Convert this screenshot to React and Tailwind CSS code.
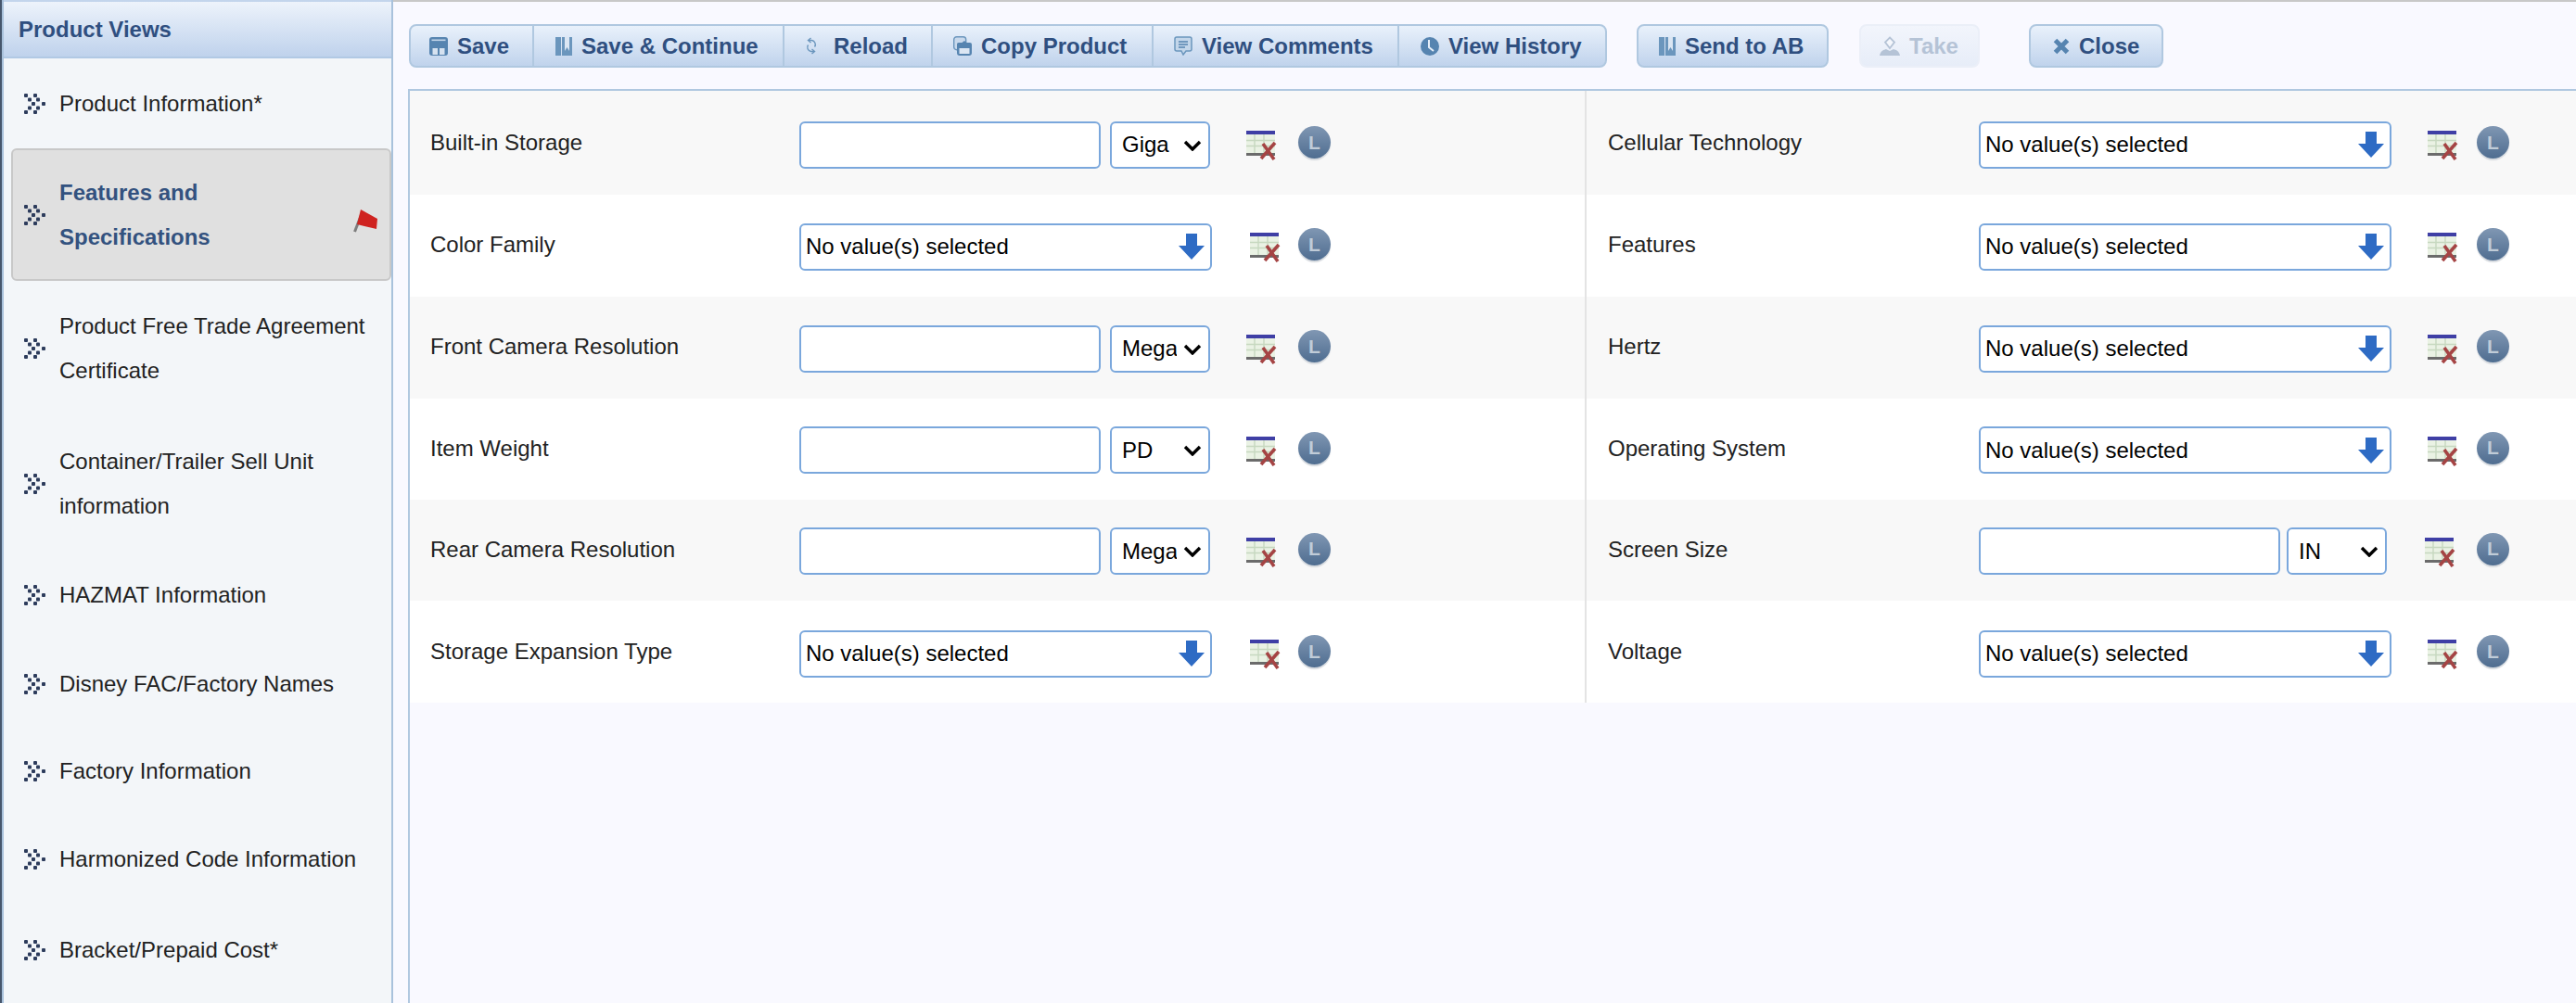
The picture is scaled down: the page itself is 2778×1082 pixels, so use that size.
import { useState } from 'react';

const sideItems = [
    { label: 'Product Information*', cls: 'h-[97px]' },
    { label: 'Features and Specifications', cls: 'h-[143px]', active: true },
    { label: 'Product Free Trade Agreement Certificate', cls: 'h-[146px]' },
    { label: 'Container/Trailer Sell Unit information', cls: 'h-[145px]' },
    { label: 'HAZMAT Information', cls: 'h-[96px]' },
    { label: 'Disney FAC/Factory Names', cls: 'h-[95px]' },
    { label: 'Factory Information', cls: 'h-[94px]' },
    { label: 'Harmonized Code Information', cls: 'h-[96px]' },
    { label: 'Bracket/Prepaid Cost*', cls: 'h-[100px]' },
];

// row heights follow the reference, it is not quite a 110px rhythm
const rows = [
    { cls: 'h-[112px] bg-[#f8f8f8]', pad: 'pt-[2px]', left: { label: 'Built-in Storage', unit: 'Giga' }, right: { label: 'Cellular Technology' } },
    { cls: 'h-[110px] bg-white', pad: '', left: { label: 'Color Family' }, right: { label: 'Features' } },
    { cls: 'h-[110px] bg-[#f8f8f8]', pad: '', left: { label: 'Front Camera Resolution', unit: 'Mega' }, right: { label: 'Hertz' } },
    { cls: 'h-[109px] bg-white', pad: '', left: { label: 'Item Weight', unit: 'PD' }, right: { label: 'Operating System' } },
    { cls: 'h-[109px] bg-[#f8f8f8]', pad: '', left: { label: 'Rear Camera Resolution', unit: 'Mega' }, right: { label: 'Screen Size', unit: 'IN' } },
    { cls: 'h-[110px] bg-white', pad: 'pt-[2px]', left: { label: 'Storage Expansion Type' }, right: { label: 'Voltage' } },
];

const chevronDots = [[1, 0], [11, 0], [5, 4.5], [14, 4.5], [9, 9], [20, 9], [5, 13.5], [14, 13.5], [1, 18], [11, 18]];

const Chevrons = () => (
    <svg width="24" height="22" viewBox="0 0 24 22" className="shrink-0" fill="#2d3c5c">
        {chevronDots.map(([x, y]) => (
            <rect key={`${x}-${y}`} x={x} y={y} width="4" height="4" rx="1" />
        ))}
    </svg>
);

const Flag = () => (
    <svg width="26" height="26" viewBox="0 0 26 26" className="shrink-0">
        <path d="M1.5 25 L10 3" stroke="#7d7d7d" strokeWidth="3" />
        <path d="M8 1 L26 11 L25 22 L12 19 L4 17 Z" fill="#cf2320" />
    </svg>
);

const SaveIcon = () => (
    <svg width="20" height="20" viewBox="0 0 20 20" fill="#5684b0" className="shrink-0">
        <rect x="0" y="0" width="20" height="20" rx="3" />
        <rect x="2.5" y="2.5" width="15" height="1.6" fill="#c3d5e8" />
        <rect x="3.5" y="12" width="5.5" height="7" fill="#d6e2f0" />
        <rect x="11" y="12" width="5.5" height="7" fill="#d6e2f0" />
    </svg>
);

const BookIcon = () => (
    <svg width="18" height="20" viewBox="0 0 18 20" fill="#6b96bd" className="shrink-0">
        <rect x="0" y="0" width="6" height="20" />
        <rect x="7" y="0" width="11" height="20" />
        <path d="M10 0h5v15l-2.5-4-2.5 4z" fill="#dbe6f3" />
    </svg>
);

const ReloadIcon = () => (
    <svg width="12" height="20" viewBox="0 0 12 20" fill="none" stroke="#6b96bd" strokeWidth="1.4" className="shrink-0 mr-[8px]">
        <path d="M3 3.5h3.5a4.5 4.5 0 0 1 3 7" />
        <path d="M9 15.5H5.5a4.5 4.5 0 0 1-3-7" />
        <path d="M5.5 1 2.5 3.5 5.5 6" />
        <path d="M6.5 18l3-2.5-3-2.5" />
    </svg>
);

const CopyIcon = () => (
    <svg width="20" height="21" viewBox="0 0 20 21" className="shrink-0">
        <rect x="0.7" y="0.7" width="13" height="14" rx="3" fill="#c9d9ec" stroke="#6b96bd" strokeWidth="1.4" />
        <path d="M6.5 7h3l2.5-2 2.5 2h3.5a2 2 0 0 1 2 2v9a3 3 0 0 1-3 3H7a3 3 0 0 1-3-3V9a2 2 0 0 1 2.5-2z" fill="#5684b0" />
        <rect x="6.5" y="13" width="11" height="6" fill="#dbe6f3" />
    </svg>
);

const CommentIcon = () => (
    <svg width="20" height="21" viewBox="0 0 20 21" fill="none" className="shrink-0">
        <path d="M3 1h14a2 2 0 0 1 2 2v11a2 2 0 0 1-2 2h-4l-3 4-2-4H3a2 2 0 0 1-2-2V3a2 2 0 0 1 2-2z" fill="#c3d6ea" stroke="#6b96bd" strokeWidth="1.5" />
        <path d="M5 6h10M5 9h10M5 12h7" stroke="#5684b0" strokeWidth="1.5" />
    </svg>
);

const ClockIcon = () => (
    <svg width="20" height="20" viewBox="0 0 20 20" className="shrink-0">
        <circle cx="10" cy="10" r="10" fill="#5684b0" />
        <path d="M9 3v8l5 4" stroke="#e6eef8" strokeWidth="2" fill="none" />
    </svg>
);

const TakeIcon = () => (
    <svg width="22" height="22" viewBox="0 0 22 22" fill="none" className="shrink-0">
        <path d="M11 1.5 16 6.5 11 13 6 6.5Z" stroke="#b5c3d6" strokeWidth="1.8" fill="#f5f7fc" />
        <path d="M0 21c1-5 4-6 7-7l4 2 4-2c3 1 6 2 7 7z" fill="#b5c3d6" />
    </svg>
);

const CloseIcon = () => (
    <svg width="18" height="18" viewBox="0 0 18 18" stroke="#5684b0" strokeWidth="5" className="shrink-0">
        <path d="M2.5 2.5 15.5 15.5M15.5 2.5 2.5 15.5" />
    </svg>
);

const ToolButton = ({ icon, label, cls }) => (
    <div className={`h-full flex items-center gap-[10px] text-[24px] font-bold ${cls}`}>
        {icon}
        <span>{label}</span>
    </div>
);

const ClearIcon = () => (
    <svg width="35" height="32" viewBox="0 0 35 32" className="shrink-0">
        <rect x="0" y="0" width="31" height="26" fill="#eaf2e4" />
        <rect x="0" y="0" width="31" height="4" fill="#3f3fa5" />
        <path d="M0 10.5h31M0 16.5h31M9 4v20M19 4v20" stroke="#c6d8bf" strokeWidth="1.4" />
        <rect x="0" y="24" width="31" height="3" fill="#6b6b6b" />
        <path d="M16 30 31 13M18 14 30 31" stroke="#a54444" strokeWidth="3.6" />
    </svg>
);

const LockBadge = () => (
    <div className="w-[35px] h-[35px] -mt-[3px] shrink-0 rounded-full bg-gradient-to-b from-[#8097b3] to-[#4f6d90] shadow-[0_2px_1px_#d5d9de] flex items-center justify-center text-[21px] font-bold text-[#c0ccd8]">
        L
    </div>
);

const Field = ({ field, side, pad }) => {
    const [value, setValue] = useState('');
    const isLeft = side === 'left';
    const iconCls = field.unit
        ? (isLeft ? 'ml-[37px]' : 'ml-[36px]')
        : (isLeft ? 'ml-[41px]' : 'ml-[39px]');

    return (
        <div className={`h-full flex items-center ${pad} ${isLeft ? 'pl-[22px] border-r-2 border-[#e4e4e4]' : 'pl-[23px]'}`}>
            <div className={`shrink-0 text-[24px] text-[#222] -mt-[2px] ${isLeft ? 'w-[398px]' : 'w-[400px]'}`}>{field.label}</div>
            <div className={`w-[445px] shrink-0 flex mt-[2px] ${isLeft ? 'gap-[10px]' : 'gap-[7px]'}`}>
                {field.unit ? (
                    <>
                        <input
                            value={value}
                            onChange={(e) => setValue(e.target.value)}
                            className="w-[325px] h-[51px] bg-white border-2 border-[#7aa7dc] rounded-[6px] px-2 text-[24px]"
                        />
                        <div className="relative w-[108px] h-[51px] shrink-0">
                            <select defaultValue={field.unit} className="w-full h-full appearance-none bg-white border-2 border-[#7aa7dc] rounded-[6px] pl-[11px] pr-[34px] text-[24px] text-black">
                                <option>{field.unit}</option>
                            </select>
                            <svg width="20" height="12" viewBox="0 0 20 12" fill="none" stroke="#000" strokeWidth="3.4" className="absolute right-[9px] top-[20px] pointer-events-none">
                                <path d="M2 2 10 10 18 2" />
                            </svg>
                        </div>
                    </>
                ) : (
                    <div className="w-[445px] h-[51px] bg-white border-2 border-[#7aa7dc] rounded-[6px] flex items-center justify-between pl-[5px] pr-[6px] text-[24px] text-black">
                        <span>No value(s) selected</span>
                        <svg width="28" height="28" viewBox="0 0 28 28" fill="#2e6bc4">
                            <path d="M8 0h12v13h8L14 28 0 13h8z" />
                        </svg>
                    </div>
                )}
            </div>
            <div className={`shrink-0 mt-[4px] ${isLeft ? 'w-[93px]' : 'w-[92px]'}`}>
                <div className={iconCls}><ClearIcon /></div>
            </div>
            <LockBadge />
        </div>
    );
};

const App = () => {
    return (
        <div className="w-[2778px] h-[1082px] flex overflow-hidden bg-[#f9f9ff] text-black font-['Liberation_Sans',Arial,sans-serif]">
            <aside className="w-[424px] h-full shrink-0 border-l-2 border-[#46566c]">
                <div className="h-full border-l-2 border-r-2 border-[#a9c2dc] bg-[#f3f6f9] flex flex-col">
                    <div className="h-[63px] shrink-0 border-t-2 border-b-2 border-t-[#c3d5ec] border-b-[#b1c9e4] bg-gradient-to-b from-[#edf3fb] to-[#bfd2ec] flex items-center pl-[16px] text-[24px] font-bold text-[#2f4f80]">
                        Product Views
                    </div>
                    {sideItems.map((item) => (
                        <div
                            key={item.label}
                            className={`shrink-0 flex items-center text-[24px] leading-[48px] ${item.cls} ${item.active ? 'ml-[8px] pl-[11px] pr-[10px] border-2 border-[#c8c8c8] rounded-[6px] bg-[#e0e0e0] font-bold text-[#33527f]' : 'pl-[21px] text-[#222]'}`}
                        >
                            <Chevrons />
                            <span className={`ml-[15px] ${item.active ? 'w-[300px]' : 'w-[350px]'}`}>{item.label}</span>
                            {item.active && <span className="ml-auto mr-[3px] mt-[12px]"><Flag /></span>}
                        </div>
                    ))}
                </div>
            </aside>

            <main className="flex-1 min-w-0 border-t-2 border-[#c8c8c8] flex flex-col">
                <div className="h-[94px] shrink-0 flex items-start pt-[24px] pl-[17px] text-[#2f4f80]">
                    <div className="h-[47px] flex rounded-[8px] border-2 border-[#b0c8e0] bg-gradient-to-b from-[#e9f1fb] to-[#c0d3ec] divide-x-2 divide-[#b0c8e0]">
                        <ToolButton icon={<SaveIcon />} label="Save" cls="w-[133px] pl-[20px]" />
                        <ToolButton icon={<BookIcon />} label="Save & Continue" cls="w-[270px] pl-[23px]" />
                        <ToolButton icon={<ReloadIcon />} label="Reload" cls="w-[160px] pl-[23px]" />
                        <ToolButton icon={<CopyIcon />} label="Copy Product" cls="w-[238px] pl-[22px]" />
                        <ToolButton icon={<CommentIcon />} label="View Comments" cls="w-[265px] pl-[22px]" />
                        <ToolButton icon={<ClockIcon />} label="View History" cls="w-[222px] pl-[23px]" />
                    </div>
                    <div className="ml-[32px] w-[207px] h-[47px] rounded-[8px] border-2 border-[#b0c8e0] bg-gradient-to-b from-[#e9f1fb] to-[#c0d3ec]">
                        <ToolButton icon={<BookIcon />} label="Send to AB" cls="pl-[22px]" />
                    </div>
                    <div className="ml-[33px] w-[130px] h-[47px] rounded-[8px] border-2 border-[#ebeff8] bg-gradient-to-b from-[#f2f5fc] to-[#e7edf8] text-[#b5c3d6]">
                        <ToolButton icon={<TakeIcon />} label="Take" cls="pl-[20px]" />
                    </div>
                    <div className="ml-[53px] w-[145px] h-[47px] rounded-[8px] border-2 border-[#b0c8e0] bg-gradient-to-b from-[#e9f1fb] to-[#c0d3ec]">
                        <ToolButton icon={<CloseIcon />} label="Close" cls="pl-[24px]" />
                    </div>
                </div>

                <div className="flex-1 ml-[16px] border-t-2 border-l-2 border-[#b0c8e0]">
                    {rows.map((row) => (
                        <div key={row.left.label} className={`grid grid-cols-[1269px_1fr] ${row.cls}`}>
                            <Field field={row.left} side="left" pad={row.pad} />
                            <Field field={row.right} side="right" pad={row.pad} />
                        </div>
                    ))}
                </div>
            </main>
        </div>
    );
};

export default App;
